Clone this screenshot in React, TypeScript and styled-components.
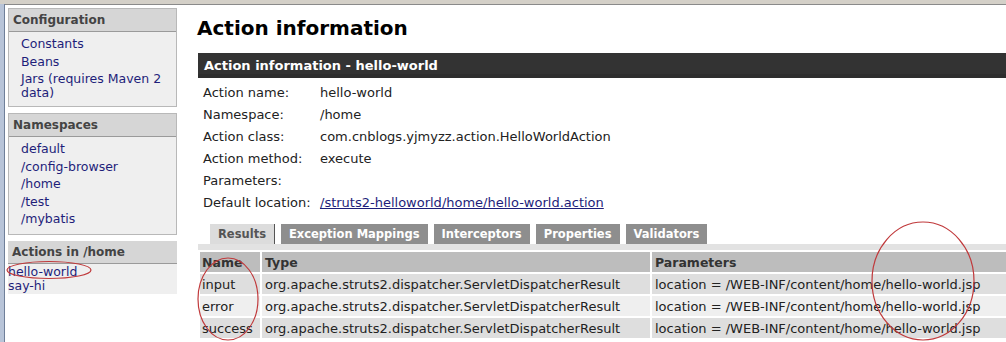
import styled, { createGlobalStyle } from "styled-components";

const GlobalStyle = createGlobalStyle`
  html, body {
    margin: 0;
    padding: 0;
    background: #fff;
  }
  body {
    font-family: "DejaVu Sans", Verdana, sans-serif;
    font-size: 13px;
    color: #000;
    width: 1006px;
    height: 342px;
    overflow: hidden;
  }
`;

const Frame = styled.div`
  position: relative;
  display: flex;
  width: 1006px;
  height: 342px;
  box-sizing: border-box;
  border-top: 4px solid #d4d0c8;
  box-shadow: inset 0 1px 0 #8a8a8a;
  overflow: hidden;
`;

const Edge = styled.div`
  width: 4px;
  flex-shrink: 0;
  background: #b8c4d8;
  border-right: 1px solid #6f7f99;
`;

const Sidebar = styled.div`
  width: 169px;
  flex-shrink: 0;
  padding: 4px 0 0 3px;
  display: flex;
  flex-direction: column;
  gap: 6px;
`;

const Panel = styled.div<{ $boxed?: boolean }>`
  background: #efefef;
  border: ${({ $boxed }) => ($boxed ? "1px solid #b8b8b8" : "none")};
  padding-bottom: ${({ $boxed }) => ($boxed ? "6px" : "0")};
`;

const PanelHeader = styled.div`
  background: #d6d6d6;
  color: #444;
  font-weight: bold;
  font-size: 12px;
  height: 22px;
  line-height: 22px;
  padding-left: 4px;
  border-bottom: 1px solid #9a9a9a;
  margin-bottom: 3px;
`;

const NavLink = styled.a<{ $flush?: boolean }>`
  display: block;
  color: #1e1e7a;
  text-decoration: none;
  font-size: 12.5px;
  line-height: 17.5px;
  padding-left: ${({ $flush }) => ($flush ? "0" : "12px")};
  padding-right: 4px;
`;

const WrappedLink = styled(NavLink)`
  line-height: 14px;
  padding-top: 2px;
`;

const ActionList = styled.div`
  margin-top: -3px;
  padding: 1px 0 1px;

  ${NavLink} {
    line-height: 14px;
  }
`;

const Main = styled.div`
  flex: 1;
  padding-left: 21px;
  min-width: 0;
`;

const Title = styled.h1`
  margin: 11px 0 0 -1px;
  font-size: 20px;
  line-height: 26px;
  font-weight: bold;
  color: #000;
`;

const Bar = styled.div`
  margin-top: 12px;
  background: #333;
  color: #fff;
  font-weight: bold;
  font-size: 13px;
  height: 25px;
  line-height: 25px;
  padding-left: 6px;
  white-space: nowrap;
  box-shadow: inset 0 -4px 0 #2e2e2e;
`;

const InfoGrid = styled.div`
  display: grid;
  grid-template-columns: 117px auto;
  padding: 4px 0 0 5px;
  color: #222;
`;

const InfoCell = styled.div`
  height: 22px;
  line-height: 22px;
  white-space: nowrap;
`;

const InfoLink = styled.a`
  color: #1e1e7a;
  text-decoration: underline;
`;

const Tabs = styled.div`
  display: flex;
  gap: 6px;
  padding: 10px 0 0 12px;
`;

const Tab = styled.div<{ $active?: boolean }>`
  height: 20px;
  line-height: 20px;
  padding: 0 8px;
  font-weight: bold;
  font-size: 11.5px;
  white-space: nowrap;
  background: ${({ $active }) => ($active ? "#dcdcdc" : "#8e8e8e")};
  color: ${({ $active }) => ($active ? "#555" : "#fff")};
  border-right: ${({ $active }) => ($active ? "1px solid #555" : "none")};
`;

const TabStrip = styled.div`
  height: 6px;
  background: #e2e2e2;
`;

const Table = styled.table`
  border-collapse: separate;
  border-spacing: 2px;
  table-layout: fixed;
  width: 820px;
  color: #222;
`;

const HeadCell = styled.th<{ $w?: number }>`
  text-align: left;
  background: #bdbdbd;
  color: #333;
  font-weight: bold;
  font-size: 12.5px;
  height: 20px;
  padding: 0 3px;
  white-space: nowrap;
  overflow: hidden;
  width: ${({ $w }) => ($w ? `${$w}px` : "auto")};

  &:first-child {
    padding: 0 1px 0 2px;
  }
`;

const Cell = styled.td<{ $odd?: boolean }>`
  background: ${({ $odd }) => ($odd ? "#dedede" : "#efefef")};
  height: 20px;
  padding: 0 3px;
  white-space: nowrap;
  overflow: hidden;

  &:first-child {
    padding: 0 1px 0 2px;
  }
`;

const Marks = styled.svg`
  position: absolute;
  left: 0;
  top: -4px;
  width: 1006px;
  height: 342px;
  pointer-events: none;
`;

const results = ["input", "error", "success"];

export default function App() {
  return (
    <>
      <GlobalStyle />
      <Frame>
        <Edge />
        <Sidebar>
          <Panel $boxed>
            <PanelHeader>Configuration</PanelHeader>
            <NavLink href="#">Constants</NavLink>
            <NavLink href="#">Beans</NavLink>
            <WrappedLink href="#">Jars (requires Maven 2 data)</WrappedLink>
          </Panel>
          <Panel $boxed>
            <PanelHeader>Namespaces</PanelHeader>
            <NavLink href="#">default</NavLink>
            <NavLink href="#">/config-browser</NavLink>
            <NavLink href="#">/home</NavLink>
            <NavLink href="#">/test</NavLink>
            <NavLink href="#">/mybatis</NavLink>
          </Panel>
          <div>
            <PanelHeader>Actions in /home</PanelHeader>
            <Panel>
              <ActionList>
                <NavLink href="#" $flush>
                  hello-world
                </NavLink>
                <NavLink href="#" $flush>
                  say-hi
                </NavLink>
              </ActionList>
            </Panel>
          </div>
        </Sidebar>
        <Main>
          <Title>Action information</Title>
          <Bar>Action information - hello-world</Bar>
          <InfoGrid>
            <InfoCell>Action name:</InfoCell>
            <InfoCell>hello-world</InfoCell>
            <InfoCell>Namespace:</InfoCell>
            <InfoCell>/home</InfoCell>
            <InfoCell>Action class:</InfoCell>
            <InfoCell>com.cnblogs.yjmyzz.action.HelloWorldAction</InfoCell>
            <InfoCell>Action method:</InfoCell>
            <InfoCell>execute</InfoCell>
            <InfoCell>Parameters:</InfoCell>
            <InfoCell />
            <InfoCell>Default location:</InfoCell>
            <InfoCell>
              <InfoLink href="#">/struts2-helloworld/home/hello-world.action</InfoLink>
            </InfoCell>
          </InfoGrid>
          <Tabs>
            <Tab $active>Results</Tab>
            <Tab>Exception Mappings</Tab>
            <Tab>Interceptors</Tab>
            <Tab>Properties</Tab>
            <Tab>Validators</Tab>
          </Tabs>
          <TabStrip />
          <Table>
            <colgroup>
              <col style={{ width: 60 }} />
              <col style={{ width: 388 }} />
              <col />
            </colgroup>
            <thead>
              <tr>
                <HeadCell>Name</HeadCell>
                <HeadCell>Type</HeadCell>
                <HeadCell>Parameters</HeadCell>
              </tr>
            </thead>
            <tbody>
              {results.map((name, i) => (
                <tr key={name}>
                  <Cell $odd={i % 2 === 0}>{name}</Cell>
                  <Cell $odd={i % 2 === 0}>
                    org.apache.struts2.dispatcher.ServletDispatcherResult
                  </Cell>
                  <Cell $odd={i % 2 === 0}>
                    location = /WEB-INF/content/home/hello-world.jsp
                  </Cell>
                </tr>
              ))}
            </tbody>
          </Table>
        </Main>
        <Marks viewBox="0 0 1006 342">
          <g fill="none" stroke="#c0393b" strokeWidth="1.2">
            <ellipse cx="49" cy="270" rx="42" ry="8.5" />
            <ellipse cx="228" cy="299" rx="30" ry="41" />
            <ellipse cx="923" cy="281" rx="51" ry="59" />
          </g>
        </Marks>
      </Frame>
    </>
  );
}
